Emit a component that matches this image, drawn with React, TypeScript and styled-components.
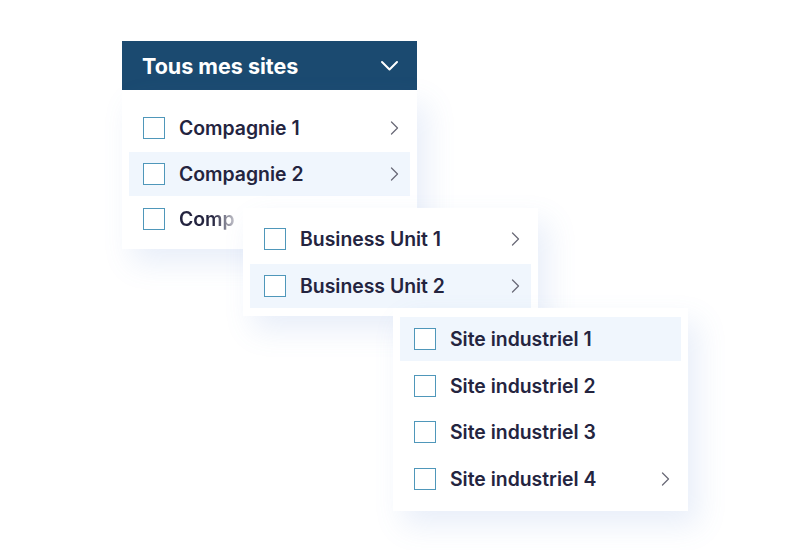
import React from 'react';
import styled, { createGlobalStyle } from 'styled-components';

const GlobalStyle = createGlobalStyle`
  html, body {
    margin: 0;
    padding: 0;
    background: #ffffff;
  }
  body {
    font-family: Inter, "Noto Sans", Arial, sans-serif;
    -webkit-font-smoothing: antialiased;
  }
`;

const Stage = styled.div`
  position: relative;
  width: 811px;
  height: 550px;
  overflow: hidden;
  background: #ffffff;
`;

const Dropdown = styled.div`
  position: absolute;
  left: 122px;
  top: 41px;
  width: 295px;
  z-index: 1;
`;

const Header = styled.div`
  display: flex;
  align-items: center;
  justify-content: space-between;
  height: 49px;
  padding: 0 18px 0 20px;
  box-sizing: border-box;
  background: #1b4a70;
  color: #ffffff;
  font-size: 21.5px;
  font-weight: 700;
`;

const Panel = styled.div<{ $x?: number; $y?: number; $z?: number; $pt?: number; $pb?: number; $gap?: number }>`
  position: ${(p) => (p.$x !== undefined ? 'absolute' : 'static')};
  left: ${(p) => p.$x ?? 0}px;
  top: ${(p) => p.$y ?? 0}px;
  z-index: ${(p) => p.$z ?? 1};
  width: 295px;
  box-sizing: border-box;
  padding: ${(p) => p.$pt ?? 9}px 7px ${(p) => p.$pb ?? 8}px;
  background: #ffffff;
  box-shadow: 10px 14px 28px rgba(95, 135, 215, 0.14);
  display: flex;
  flex-direction: column;
  gap: ${(p) => p.$gap ?? 2.5}px;
`;

const Row = styled.div<{ $active?: boolean }>`
  display: flex;
  align-items: center;
  height: 44px;
  padding: 0 11px 0 14px;
  background: ${(p) => (p.$active ? '#f0f6fd' : 'transparent')};
  color: #24243f;
  font-size: 19.4px;
  font-weight: 600;
  white-space: nowrap;
  overflow: hidden;
`;

const Box = styled.span`
  flex: none;
  width: 22px;
  height: 22px;
  box-sizing: border-box;
  border: 1.5px solid #4f97ba;
  background: #ffffff;
  margin-right: 14px;
`;

const Label = styled.span`
  flex: 1;
  overflow: hidden;
`;

// last item of the first list fades out under the sub-menu
const Fade = styled.span`
  background: linear-gradient(90deg, #24243f 60%, rgba(36, 36, 63, 0.25));
  -webkit-background-clip: text;
  background-clip: text;
  color: transparent;
`;

const ChevronRight = () => (
  <svg width="9" height="16" viewBox="0 0 9 16" fill="none">
    <path d="M1.5 2l6 6-6 6" stroke="#6b6b78" strokeWidth="1.3" strokeLinecap="round" strokeLinejoin="round" />
  </svg>
);

const ChevronDown = () => (
  <svg width="19" height="11" viewBox="0 0 19 11" fill="none">
    <path d="M2 2l7.5 7.5L17 2" stroke="#ffffff" strokeWidth="2" strokeLinecap="round" strokeLinejoin="round" />
  </svg>
);

interface Item {
  label: string;
  active?: boolean;
  more?: boolean;
}

const MenuRows: React.FC<{ items: Item[] }> = ({ items }) => (
  <>
    {items.map((it) => (
      <Row key={it.label} $active={it.active}>
        <Box />
        <Label>{it.label}</Label>
        {it.more && <ChevronRight />}
      </Row>
    ))}
  </>
);

export default function App() {
  return (
    <Stage>
      <GlobalStyle />
      <Dropdown>
        <Header>
          <span>Tous mes sites</span>
          <ChevronDown />
        </Header>
        <Panel $pt={16} $pb={8} $gap={1.5}>
          <MenuRows
            items={[
              { label: 'Compagnie 1', more: true },
              { label: 'Compagnie 2', active: true, more: true },
            ]}
          />
          <Row>
            <Box />
            <Label>
              <Fade>Comp</Fade>
            </Label>
          </Row>
        </Panel>
      </Dropdown>

      <Panel $x={243} $y={208} $z={2} $pt={9} $pb={8}>
        <MenuRows
          items={[
            { label: 'Business Unit 1', more: true },
            { label: 'Business Unit 2', active: true, more: true },
          ]}
        />
      </Panel>

      <Panel $x={393} $y={308} $z={3} $pt={9} $pb={10}>
        <MenuRows
          items={[
            { label: 'Site industriel 1', active: true },
            { label: 'Site industriel 2' },
            { label: 'Site industriel 3' },
            { label: 'Site industriel 4', more: true },
          ]}
        />
      </Panel>
    </Stage>
  );
}
